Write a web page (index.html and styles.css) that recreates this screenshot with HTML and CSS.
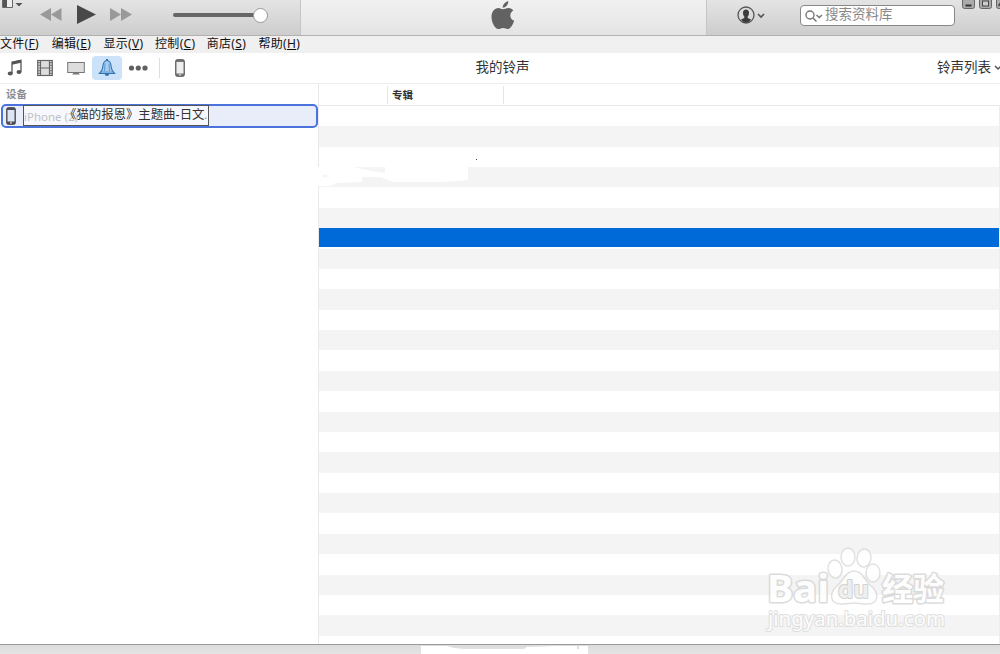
FILE: index.html
```html
<!DOCTYPE html>
<html lang="zh-CN">
<head>
  <meta charset="UTF-8" />
  <title>iTunes</title>
  <link rel="stylesheet" href="styles.css">
</head>
<body>
  <header class="player">
    <div class="controls">
      <svg class="panel-icon" width="24" height="10" viewBox="0 0 24 10">
        <path d="M2.500-1V7.500H12.500V-1" fill="#eee" stroke="#666"/>
        <path d="M3 0h4v7H3z" fill="#555"/>
        <path d="M15.500 3h7l-3.500 3.500z" fill="#555"/>
      </svg>
      <svg class="transport" width="92" height="22" viewBox="0 0 92 22">
        <path d="M11 4v13L0 10.500zM21.500 4v13L11 10.500z" fill="#999"/>
        <path d="M37 1v19l19-9.500z" fill="#484848"/>
        <path d="M70 4v13l11-6.500zM81 4v13l11-6.500z" fill="#999"/>
      </svg>
      <div class="volume"><span class="knob"></span></div>
    </div>
    <div class="display">
      <svg width="24" height="30" viewBox="0 0 24 30">
        <path d="M11.500 7.800c.5-3.500 2.500-6 5.800-6.800.2 3.500-2.500 6.600-5.800 6.800z" fill="#626262"/>
        <path d="M11.800 9.300C13.500 9.300 15 8 17.500 8c2 0 3.800 1 4.800 2.500-4.500 2.600-3.700 8.500.9 10.200-.8 2.300-3.300 8.300-6.200 8.300-1.800 0-2.600-1.100-4.800-1.100S9.200 29 7.400 29C3.700 29 .5 21.800.5 17 .5 11.500 3.700 8 7.300 8c1.900 0 3.200 1.300 4.500 1.300z" fill="#626262"/>
      </svg>
    </div>
    <div class="account">
      <svg class="user" width="28" height="18" viewBox="0 0 28 18">
        <circle cx="9" cy="9" r="8" fill="none" stroke="#555" stroke-width="1.300"/>
        <path d="M6 6.500C6 2.500 12 2.500 12 6.500c0 2-.4 3-1.300 4v1.500l3.300 1.500C12 17.500 6 17.500 4 13.500L7.300 12v-1.500C6.400 9.500 6 8.500 6 6.500z" fill="#3c3c3c"/>
        <path d="M21 8l3 3 3-3" fill="none" stroke="#555" stroke-width="1.600"/>
      </svg>
      <div class="search">
        <svg width="18" height="14" viewBox="0 0 18 14">
          <circle cx="5" cy="6" r="4" fill="none" stroke="#777" stroke-width="1.400"/>
          <path d="M8 9l3.500 3.500M11.500 6l2.700 2.500L17 6" fill="none" stroke="#777" stroke-width="1.500"/>
        </svg>
        <span>搜索资料库</span>
      </div>
      <svg class="window-buttons" width="38" height="10" viewBox="0 0 38 10">
        <g fill="#aaa" stroke="#666">
          <rect x=".500" y="-4" width="12" height="12.500" rx="2"/>
          <rect x="17.500" y="-4" width="12" height="12.500" rx="2"/>
          <rect x="34.500" y="-4" width="12" height="12.500" rx="2"/>
        </g>
        <path d="M3.500 5.500h6" stroke="#333" stroke-width="2"/>
        <rect x="20.500" y="1" width="6" height="5" fill="#ccc" stroke="#444"/>
        <path d="M36.500 6l2-3" stroke="#444" stroke-width="1.500"/>
      </svg>
    </div>
  </header>

  <nav class="menu">
    <span>文件(<u>F</u>)</span>
    <span>编辑(<u>E</u>)</span>
    <span>显示(<u>V</u>)</span>
    <span>控制(<u>C</u>)</span>
    <span>商店(<u>S</u>)</span>
    <span>帮助(<u>H</u>)</span>
  </nav>

  <div class="toolbar">
    <div class="sources">
      <div class="source">
        <svg width="16" height="18" viewBox="0 0 16 18">
          <path d="M5 14.500V3.200l9-2v11.500" fill="none" stroke="#555" stroke-width="1.300"/>
          <path d="M5 2.800l9-2v3l-9 2z" fill="#555"/>
          <ellipse cx="3.200" cy="14.600" rx="2.500" ry="2" fill="#555"/>
          <ellipse cx="12" cy="13" rx="2.500" ry="2" fill="#555"/>
        </svg>
      </div>
      <div class="source">
        <svg width="16" height="18" viewBox="0 0 16 18">
          <rect x=".700" y="1.500" width="14.600" height="15" fill="#ddd" stroke="#666" stroke-width="1.200"/>
          <path d="M3.500 1v16M12.500 1v16M3.500 9h9" stroke="#666" stroke-width="1.200"/>
          <path d="M2 3v13M14 3v13" stroke="#666" stroke-width="1.500" stroke-dasharray="1.200 1.500"/>
        </svg>
      </div>
      <div class="source">
        <svg width="18" height="18" viewBox="0 0 18 18">
          <rect x=".700" y="3.500" width="16.600" height="10" fill="#ddd" stroke="#777"/>
          <path d="M5 15.500h8l-2-2H7z" fill="#777"/>
        </svg>
      </div>
      <div class="source active">
        <svg width="18" height="18" viewBox="0 0 18 18">
          <path d="M9 1.500C5.500 1.500 5 4.500 4.700 8.500 4.500 11.500 3.500 12.500 1.500 14.500h15C14.500 12.500 13.500 11.500 13.300 8.500 13 4.500 12.500 1.500 9 1.500z" fill="#a8cdf0" stroke="#3675b5" stroke-width="1.200"/>
          <path d="M7 4.500L6.500 12M11 4.500l.5 7.500M3 13h12" fill="none" stroke="#5e98d0"/>
          <path d="M6.800 15h4.400a2.200 2 0 0 1-4.400 0z" fill="#3675b5"/>
          <path d="M8 1h2" stroke="#3675b5" stroke-width="2"/>
        </svg>
      </div>
      <div class="source dots">
        <svg width="20" height="18" viewBox="0 0 20 18">
          <g fill="#606060"><circle cx="3.500" cy="9" r="2.600"/><circle cx="10.300" cy="9" r="2.600"/><circle cx="17" cy="9" r="2.600"/></g>
        </svg>
      </div>
      <span class="divider"></span>
      <svg class="device" width="10" height="18" viewBox="0 0 10 18">
        <rect x=".700" y=".700" width="8.600" height="16.600" rx="1.500" fill="#777" stroke="#555"/>
        <path d="M1.500 3h7v11.500h-7z" fill="#eee"/>
        <circle cx="5" cy="15.900" r=".800" fill="#eee"/>
      </svg>
    </div>
    <h1>我的铃声</h1>
    <div class="view">
      <span>铃声列表</span>
      <svg width="8" height="6" viewBox="0 0 8 6"><path d="M1 1l3 3 3-3" fill="none" stroke="#555" stroke-width="1.500"/></svg>
    </div>
  </div>

  <main class="content">
    <aside class="sidebar">
      <h2>设备</h2>
      <div class="phone">
        <svg width="10" height="18" viewBox="0 0 10 18">
          <rect x=".700" y=".700" width="8.600" height="16.600" rx="1.500" fill="#4b4e58" stroke="#444"/>
          <path d="M1.500 3h7v11.500h-7z" fill="#dfe4f4"/>
          <circle cx="5" cy="15.900" r=".800" fill="#eee"/>
        </svg>
        <span class="phone-name">iPhone (2)</span>
        <div class="drag-label">《猫的报恩》主题曲-日文<i>.</i></div>
      </div>
    </aside>
    <section class="songs">
      <div class="columns">
        <span></span>
        <span>专辑</span>
        <span></span>
      </div>
      <div class="rows">
        <div class="selected"></div>
        <svg class="smudge" width="170" height="40" viewBox="0 0 170 40">
          <path d="M0 15h36l12 3 19 3v-6h83v13l-26 2H75l-13-5h-18v5l-26 1-6 3H0z" fill="#fff"/>
          <rect x="5" y="23" width="4" height="2" fill="#f4f4f4"/>
          <rect x="158" y="7" width="1" height="1" fill="#444"/>
        </svg>
      </div>
    </section>
  </main>

  <footer class="status">
    <svg width="167" height="9" viewBox="0 0 167 9">
      <path d="M0 1h26l7 2 10 1h60l3-2 30-1h20v3h2V1h9v8H0z" fill="#fff"/>
    </svg>
  </footer>

  <svg class="watermark" width="190" height="100" viewBox="0 0 190 100">
    <g fill="#fff" stroke="#dcdcdc" stroke-width="1.500">
      <ellipse cx="75" cy="29" rx="7" ry="9" transform="rotate(-8 75 29)"/>
      <ellipse cx="88" cy="17" rx="7" ry="9"/>
      <ellipse cx="104" cy="18" rx="7" ry="9" transform="rotate(8 104 18)"/>
      <ellipse cx="113" cy="33" rx="7" ry="9"/>
      <path d="M94 31c8 0 10 8 16 14 10 8 9 19-3 19-6 0-8-1-13-1s-7 1-13 1c-11 0-13-11-3-19 6-5 8-14 16-14z"/>
    </g>
    <g class="mark">
      <text x="7" y="62" font-size="38" font-weight="bold" textLength="62" lengthAdjust="spacingAndGlyphs">Bai</text>
      <text class="du" x="78" y="58" font-size="24" font-weight="bold" textLength="31" lengthAdjust="spacingAndGlyphs">du</text>
      <text x="122" y="60" font-size="31" font-weight="bold" textLength="62" lengthAdjust="spacingAndGlyphs">经验</text>
      <text class="url" x="8" y="86" font-size="20" textLength="177" lengthAdjust="spacingAndGlyphs">jingyan.baidu.com</text>
    </g>
  </svg>
</body>
</html>
```
FILE: styles.css
```css
* { box-sizing: border-box; margin: 0; padding: 0; }
body { width: 1000px; height: 654px; overflow: hidden; display: flex; flex-direction: column; position: relative; background: #fff; color: #333; font-family: "Liberation Sans", "Noto Sans CJK SC", sans-serif; font-size: 12px; }
svg { display: block; flex: none; }
.player { display: flex; height: 36px; border-bottom: 1px solid #b1b1b1; background: linear-gradient(#e4e4e4, #cdcdcd); flex: none; }
.controls { width: 300px; display: flex; align-items: flex-start; }
.transport { margin: 4px 0 0 16px; }
.volume { width: 95px; height: 4px; margin: 13px 0 0 41px; border-radius: 2px; background: #666; display: flex; align-items: center; justify-content: flex-end; }
.knob { width: 15px; height: 15px; border: 1px solid #999; border-radius: 50%; background: #fff; flex: none; }
.display { width: 407px; display: flex; justify-content: center; border: solid #c5c5c5; border-width: 0 1px; background: linear-gradient(#f1f1f1, #e4e4e4); }
.display svg { margin-left: -1px; }
.account { flex: 1; display: flex; align-items: flex-start; }
.user { margin: 6px 0 0 30px; }
.search { width: 155px; height: 21px; margin: 5px 0 0 35px; padding-left: 4px; display: flex; align-items: center; gap: 2px; border: 1px solid #888; border-radius: 4px; background: #fff; color: #888; font-size: 13.5px; line-height: 18px; overflow: hidden; white-space: nowrap; }
.search span { margin-top: -2px; }
.window-buttons { margin-left: 7px; }

.menu { height: 17px; display: flex; gap: 12px; background: #f0f0f0; color: #111; font-family: "Noto Sans", "Noto Sans CJK SC", sans-serif; line-height: 16px; letter-spacing: .3px; flex: none; }
.menu span { width: 39.7px; white-space: nowrap; }

.toolbar { height: 31px; display: grid; grid-template-columns: 318px 1fr 318px; align-items: center; border-bottom: 1px solid #eee; flex: none; }
.sources { display: flex; align-items: center; }
.source { width: 31px; height: 24px; display: flex; align-items: center; justify-content: center; border-radius: 4px; }
.source:first-child { width: 29px; }
.source.active { width: 30px; margin: 0 1px; background: #cce2f8; }
.source.dots { width: 30px; }
.divider { width: 1px; height: 20px; margin: 0 15px 0 6px; background: #ddd; }
.toolbar h1 { padding-left: 5px; text-align: center; font-size: 13.5px; font-weight: normal; line-height: 20px; }
.view { display: flex; align-items: center; justify-content: flex-end; gap: 3px; margin-right: -2px; font-size: 13.5px; line-height: 20px; }

.content { height: 560px; display: flex; flex: none; }
.sidebar { width: 318px; }
.sidebar h2 { height: 20px; padding-left: 6px; color: #8a8a92; font-size: 10.5px; line-height: 20px; }
.phone { position: relative; width: 317px; height: 24px; margin-left: 1px; padding-left: 3px; display: flex; align-items: center; border: 2px solid #4b73dc; border-radius: 5px; background: #e9edf9; }
.phone-name { margin-left: 8px; color: #60606a; font-family: "Noto Sans", sans-serif; font-size: 11.5px; }
.drag-label { position: absolute; left: 20px; top: -1px; width: 186px; height: 21px; padding-left: 40px; border: 1px solid #555; background: rgba(255, 255, 255, .6); color: #333; font-size: 12.4px; line-height: 18px; white-space: nowrap; }
.drag-label i { color: #888; }
.songs { width: 682px; border-left: 1px solid #e9e9e9; }
.columns { height: 22px; display: flex; padding-top: 2px; border-bottom: 1px solid #e9e9e9; }
.columns span { width: 69px; height: 18px; padding-left: 4px; border-right: 1px solid #e5e5e5; font-size: 10.5px; font-weight: bold; line-height: 18px; }
.columns span:nth-child(2) { width: 116px; }
.columns span:nth-child(3) { flex: 1; border: 0; }
.rows { position: relative; height: 538px; padding-top: 122px; border-right: 1px solid #eee; background: repeating-linear-gradient(#fff 0 20.37px, #f4f4f4 20.37px 40.74px); }
.selected { height: 19px; background: #006ad9; }
.smudge { position: absolute; left: -1px; top: 46px; }
.status { height: 10px; padding-left: 421px; border-top: 1px solid #999; background: linear-gradient(#dcdcdc, #e4e4e4); flex: none; }
.watermark { position: absolute; left: 760px; top: 540px; opacity: .85; }
.mark { fill: #fff; stroke: #d6d6d6; stroke-width: 3px; stroke-linejoin: round; paint-order: stroke; font-family: "Noto Sans", "Noto Sans CJK SC", sans-serif; }
.mark .du { fill: #eee; stroke: #ccc; stroke-width: 2px; }
.mark .url { stroke: #dadada; stroke-width: 2px; }
```
